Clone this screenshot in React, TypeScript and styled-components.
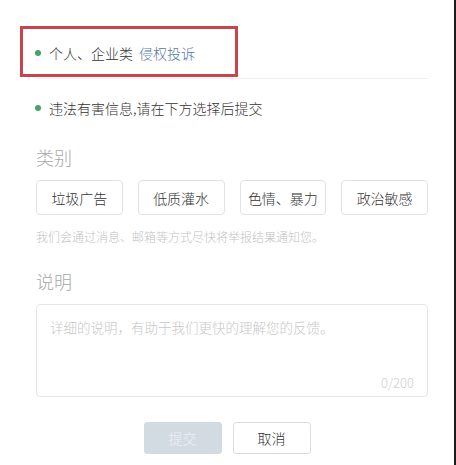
import React from "react";
import styled, { createGlobalStyle } from "styled-components";

const GlobalStyle = createGlobalStyle`
  html, body {
    margin: 0;
    padding: 0;
    background: #fff;
  }
  body {
    font-family: "Noto Sans CJK SC", "Noto Sans", "Liberation Sans", sans-serif;
    font-weight: 300;
  }
`;

const Page = styled.div`
  position: relative;
  width: 454px;
  height: 465px;
  border-right: 2px solid #1c1c1c;
  background: #fff;
  overflow: hidden;
`;

const Content = styled.div`
  padding: 27px 26px 0 36px;
`;

const InfoRow = styled.div<{ $height: number; $divider?: boolean }>`
  display: flex;
  align-items: center;
  gap: 8px;
  height: ${(p) => p.$height}px;
  font-size: 14px;
  color: #333;
  border-bottom: ${(p) => (p.$divider ? "1px solid #efefef" : "none")};
`;

const Dot = styled.span`
  width: 6px;
  height: 6px;
  margin-left: -1px;
  border-radius: 50%;
  background: #45a463;
  flex: none;
`;

const Link = styled.span`
  color: #52799f;
  margin-left: 6px;
`;

const Highlight = styled.div`
  position: absolute;
  left: 20px;
  top: 26px;
  width: 218px;
  height: 51px;
  box-sizing: border-box;
  border: 3px solid #c8464b;
`;

const Label = styled.div<{ $top: number }>`
  margin-top: ${(p) => p.$top}px;
  font-size: 18px;
  line-height: 24px;
  color: #a8a8a8;
`;

const Chips = styled.div`
  display: flex;
  gap: 15px;
  margin-top: 11px;
`;

const Chip = styled.button`
  width: 87px;
  height: 35px;
  box-sizing: border-box;
  border: 1px solid #e2e2e2;
  border-radius: 4px;
  background: #fff;
  font-family: inherit;
  font-weight: inherit;
  font-size: 14px;
  color: #333;
  padding: 0;
`;

const Note = styled.div`
  margin-top: 13px;
  font-size: 12px;
  line-height: 18px;
  color: #c2c2c2;
`;

const Field = styled.div`
  margin-top: 11px;
  height: 93px;
  box-sizing: border-box;
  border: 1px solid #e6e6e6;
  border-radius: 4px;
  display: flex;
  flex-direction: column;
  padding: 12px 13px 4px 13px;
`;

const Input = styled.textarea`
  flex: 1;
  border: none;
  outline: none;
  resize: none;
  padding: 0;
  font-family: inherit;
  font-weight: inherit;
  font-size: 13.5px;
  line-height: 20px;
  color: #333;
  &::placeholder {
    color: #c8c8c8;
  }
`;

const Counter = styled.div`
  align-self: flex-end;
  font-size: 13px;
  line-height: 18px;
  color: #cfcfcf;
`;

const Actions = styled.div`
  display: flex;
  justify-content: center;
  gap: 11px;
  margin-top: 25px;
`;

const ActionButton = styled.button<{ $primary?: boolean }>`
  width: 78px;
  height: 32px;
  box-sizing: border-box;
  border-radius: 3px;
  font-family: inherit;
  font-weight: inherit;
  font-size: 14px;
  padding: 0;
  border: 1px solid ${(p) => (p.$primary ? "#d3dbe2" : "#dcdcdc")};
  background: ${(p) => (p.$primary ? "#d3dbe2" : "#fff")};
  color: ${(p) => (p.$primary ? "#eef2f5" : "#333")};
`;

const categories = ["垃圾广告", "低质灌水", "色情、暴力", "政治敏感"];

export default function App() {
  return (
    <>
      <GlobalStyle />
      <Page>
        <Content>
          <InfoRow $height={51} $divider>
            <Dot />
            <span>
              个人、企业类<Link>侵权投诉</Link>
            </span>
          </InfoRow>
          <InfoRow $height={58}>
            <Dot />
            <span>违法有害信息,请在下方选择后提交</span>
          </InfoRow>
          <Label $top={8}>类别</Label>
          <Chips>
            {categories.map((c) => (
              <Chip key={c}>{c}</Chip>
            ))}
          </Chips>
          <Note>我们会通过消息、邮箱等方式尽快将举报结果通知您。</Note>
          <Label $top={23}>说明</Label>
          <Field>
            <Input placeholder="详细的说明，有助于我们更快的理解您的反馈。" />
            <Counter>0/200</Counter>
          </Field>
        </Content>
        <Actions>
          <ActionButton $primary>提交</ActionButton>
          <ActionButton>取消</ActionButton>
        </Actions>
        <Highlight />
      </Page>
    </>
  );
}
